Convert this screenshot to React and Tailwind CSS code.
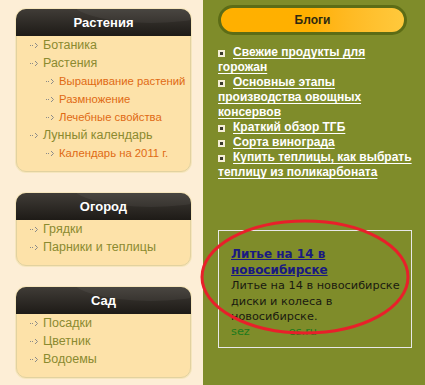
import React from "react";

const Arrow = () => (
  <svg width="9" height="7" viewBox="0 0 9 7" className="shrink-0">
    <rect x="0" y="3" width="1" height="1" fill="#8a8a8a" />
    <rect x="2" y="3" width="1" height="1" fill="#8a8a8a" />
    <path d="M5 1 L7.5 3.5 L5 6" stroke="#8a8a8a" strokeWidth="1" fill="none" />
  </svg>
);

const Item = ({ text, sub }) => (
  <div
    className={
      "flex items-center h-[18px] " +
      (sub ? "pl-[29px] gap-[4px] text-[11.3px] text-[#e06a14]" : "pl-[13px] gap-[4px] text-[12.5px] text-[#8b8a30]")
    }
  >
    <Arrow />
    <span className="whitespace-nowrap">{text}</span>
  </div>
);

const Box = ({ title, items }) => (
  <div className="w-[175px] ml-[16px] rounded-[10px] border border-[#e2d2a0] bg-[#fde2a9] pb-[9px] shadow-[0_0_0_1px_#f6e6bd]">
    <div className="relative h-[27px] -mx-px -mt-px rounded-t-[10px] overflow-hidden bg-gradient-to-b from-[#403c37] to-[#1e1b17] flex items-center justify-center">
      <div className="absolute right-[-40px] top-[-30px] w-[160px] h-[44px] rounded-[50%] bg-[#ffffff0d]" />
      <span className="relative text-white font-bold text-[13px]">{title}</span>
    </div>
    {items.map((it, i) => (
      <Item key={i} text={it[0]} sub={it[1]} />
    ))}
  </div>
);

const Bullet = () => (
  <span className="inline-flex items-center justify-center w-[7px] h-[7px] bg-[#f4eed6] mr-[8px] align-[1px]">
    <span className="w-[3px] h-[3px] bg-[#3a3a2a]" />
  </span>
);

const blogs = [
  "Свежие продукты для горожан",
  "Основные этапы производства овощных консервов",
  "Краткий обзор ТГБ",
  "Сорта винограда",
  "Купить теплицы, как выбрать теплицу из поликарбоната",
];

export default function App() {
  return (
    <div
      className="relative w-[425px] h-[385px] flex overflow-hidden"
      style={{ fontFamily: '"Liberation Sans", Arial, sans-serif' }}
    >
      <div className="w-[203px] bg-[#fdeed6] pt-[9px] flex flex-col gap-[21px]">
        <Box
          title="Растения"
          items={[
            ["Ботаника"],
            ["Растения"],
            ["Выращивание растений", true],
            ["Размножение", true],
            ["Лечебные свойства", true],
            ["Лунный календарь"],
            ["Календарь на 2011 г.", true],
          ]}
        />
        <Box title="Огород" items={[["Грядки"], ["Парники и теплицы"]]} />
        <Box title="Сад" items={[["Посадки"], ["Цветник"], ["Водоемы"]]} />
      </div>
      <div className="flex-1 bg-[#7f8c2a] pt-[5px] pl-[15px] pr-[8px]">
        <div className="h-[30px] w-[189px] rounded-full border-[3px] border-[#5c6c16] bg-gradient-to-r from-[#ffb000] via-[#ffb000] to-[#ffc93c] flex items-center justify-center">
          <span className="font-bold text-[12px] text-[#2e2a10]">Блоги</span>
        </div>
        <div className="mt-[10px] text-[12px] leading-[15px] font-bold text-white w-[194px]">
          {blogs.map((b, i) => (
            <div key={i}>
              <Bullet />
              <span className="underline underline-offset-2">{b}</span>
            </div>
          ))}
        </div>
        <div
          className="mt-[50px] w-[194px] h-[118px] border border-[#e8e8e8] pt-[16px] pl-[12px] pr-[2px] leading-[15.5px]"
          style={{ fontFamily: '"DejaVu Sans", Verdana, sans-serif' }}
        >
          <div className="text-[12px] font-bold text-[#1a1a80] underline pr-[40px]">Литье на 14 в новосибирске</div>
          <div className="text-[11.3px] text-[#1a1a10]">Литье на 14 в новосибирске диски и колеса в новосибирске.</div>
          <div className="text-[11.3px] text-[#1c7a1c] leading-[13px]">
            sez<span className="inline-block w-[39px]" />es.ru
          </div>
        </div>
      </div>
      <svg className="absolute left-0 top-0 pointer-events-none" width="425" height="385">
        <ellipse cx="305" cy="277" rx="103" ry="56" fill="none" stroke="#e8202a" strokeWidth="3" />
      </svg>
    </div>
  );
}
